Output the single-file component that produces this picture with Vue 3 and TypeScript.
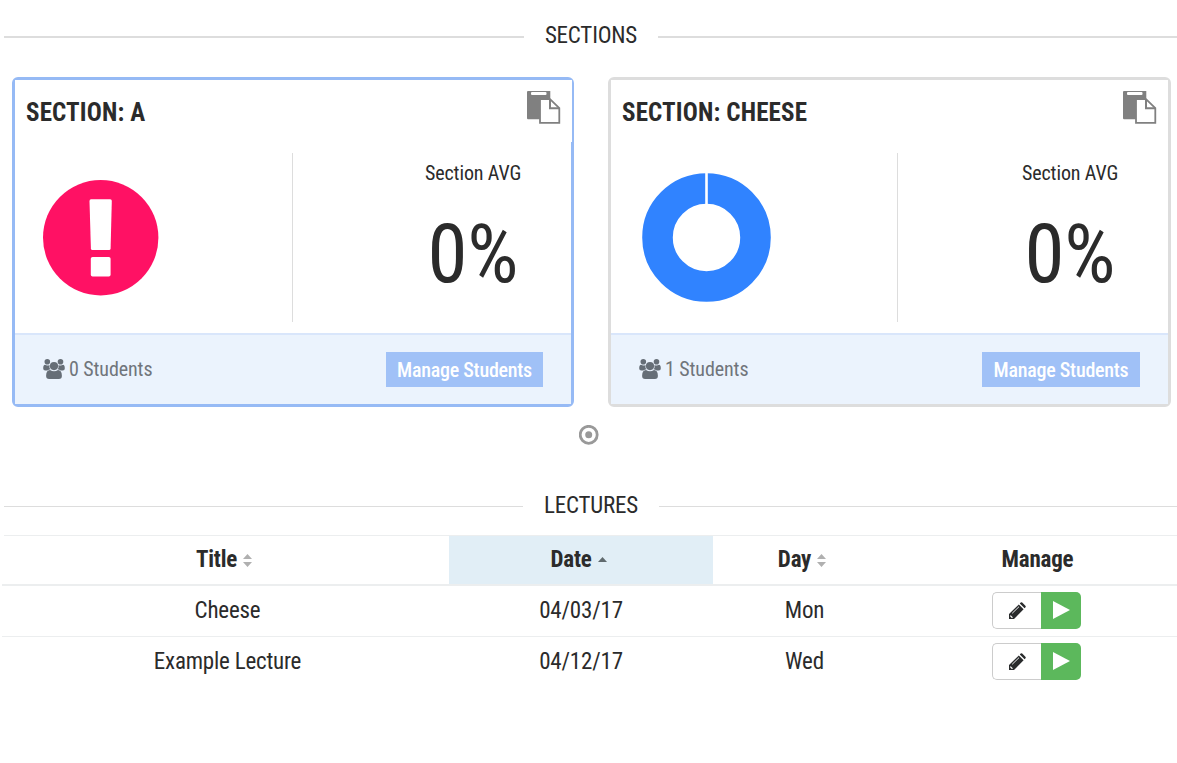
<script setup lang="ts">
interface Section {
  name: string
  students: number
  average: number
  active: boolean
}
interface Lecture {
  title: string
  date: string
  day: string
}

const sections: Section[] = [
  { name: 'A', students: 0, average: 0, active: true },
  { name: 'CHEESE', students: 1, average: 0, active: false },
]
const lectures: Lecture[] = [
  { title: 'Cheese', date: '04/03/17', day: 'Mon' },
  { title: 'Example Lecture', date: '04/12/17', day: 'Wed' },
]
</script>

<template>
  <main class="page">
    <h2 class="rule rule-thick"><span>SECTIONS</span></h2>

    <div class="cards">
      <section v-for="s in sections" :key="s.name" class="card" :class="{ active: s.active }">
        <header class="card-head">
          <h3>SECTION: {{ s.name }}</h3>
          <svg class="paste" viewBox="0 0 34 34" width="34" height="34">
            <path fill="#808080" d="M0 1Q0 0 1 0H23.3V8H13V28.2H1Q0 28.2 0 27Z" />
            <rect x="4" y="1" width="15.5" height="3" rx="1" fill="#fff" />
            <path d="M13 8.2H23L32.3 17.2V31.8H13Z" fill="#fff" stroke="#808080" stroke-width="1.8" />
            <path d="M23 8.2V17.2H32.3" fill="none" stroke="#808080" stroke-width="2" />
          </svg>
        </header>
        <div class="card-body">
          <div class="chart">
            <svg v-if="s.students === 0" class="alert" viewBox="0 0 116 116" width="116" height="116">
              <circle cx="57.7" cy="57.7" r="57.7" fill="#ff1164" />
              <path fill="#fff" d="M48 19.3H67.2Q68.8 19.3 68.8 21L67.6 68.5Q67.5 70 66 70H49.4Q48 70 47.9 68.5L46.5 21Q46.5 19.3 48 19.3Z" />
              <rect x="47.8" y="77" width="19.8" height="19.5" rx="1.8" fill="#fff" />
            </svg>
            <svg v-else class="donut" viewBox="0 0 130 130" width="130" height="130">
              <circle cx="64.5" cy="64.5" r="49" fill="none" stroke="#3083ff" stroke-width="30.6" />
              <path d="M64.5 0V34" stroke="#fff" stroke-width="2.6" />
            </svg>
          </div>
          <div class="average">
            <span class="avg-label">Section AVG</span>
            <span class="avg-value">{{ s.average }}%</span>
          </div>
        </div>
        <footer class="card-foot">
          <span class="students">
            <svg viewBox="0 0 22 20" width="22" height="20" fill="#666e77">
              <circle cx="4.3" cy="2.8" r="2.8" />
              <circle cx="17.5" cy="2.8" r="2.8" />
              <path d="M2 5.8Q4.3 7.2 6.5 6Q6 9 7.5 10.2Q5.5 10.4 4.4 11.4H2.2Q.2 11.4.2 9.4Q.2 6 2 5.8Z" />
              <path d="M20 5.8Q17.7 7.2 15.5 6Q16 9 14.5 10.2Q16.5 10.4 17.6 11.4H19.8Q21.8 11.4 21.8 9.4Q21.8 6 20 5.8Z" />
              <circle cx="11" cy="7.1" r="4.1" />
              <path d="M7 11Q11 13.4 15 11Q18.8 11.2 18.9 16.8Q18.9 20 15.9 20H6.1Q3.1 20 3.1 16.8Q3.2 11.2 7 11Z" />
            </svg>
            <span>{{ s.students }} Students</span>
          </span>
          <button class="manage">Manage Students</button>
        </footer>
      </section>
    </div>

    <div class="pager">
      <svg viewBox="0 0 20 20" width="20" height="20">
        <circle cx="9.7" cy="9.8" r="8.5" fill="none" stroke="#999" stroke-width="2.8" />
        <circle cx="9.7" cy="9.8" r="3.5" fill="#999" />
      </svg>
    </div>

    <h2 class="rule rule-thin"><span>LECTURES</span></h2>

    <table>
      <colgroup><col class="c1" /><col class="c2" /><col class="c3" /><col /></colgroup>
      <thead>
        <tr>
          <th>Title<svg class="sort" viewBox="0 0 9 13" width="9" height="13"><path fill="#b0b0b0" d="M4.5 0L9 5H0ZM0 8H9L4.5 13Z" /></svg></th>
          <th class="sorted">Date<svg class="sort" viewBox="0 0 9 13" width="9" height="13"><path fill="#606a6e" d="M4.5 3L9 8H0Z" /></svg></th>
          <th>Day<svg class="sort" viewBox="0 0 9 13" width="9" height="13"><path fill="#b0b0b0" d="M4.5 0L9 5H0ZM0 8H9L4.5 13Z" /></svg></th>
          <th>Manage</th>
        </tr>
      </thead>
      <tbody>
        <tr v-for="l in lectures" :key="l.date">
          <td>{{ l.title }}</td>
          <td>{{ l.date }}</td>
          <td>{{ l.day }}</td>
          <td>
            <div class="actions">
              <button class="edit" aria-label="Edit">
                <svg viewBox="0 0 17 17" width="17" height="17">
                  <path fill="#292b2c" d="M0 17V12L9.8 2.4L14.6 7.2L5 17ZM10.8 1.4L11.7.5Q12.4-.1 13.2.5L16.4 3.8Q17.1 4.6 16.5 5.3L15.6 6.2Z" />
                  <path d="M3.2 11.3L10 4.7" stroke="#fff" stroke-width=".9" />
                  <path fill="#fff" d="M1.5 13L4 15.5L2.8 16L1.2 14.4Z" />
                </svg>
              </button>
              <button class="play" aria-label="Start">
                <svg viewBox="0 0 17 18" width="17" height="18"><path fill="#fff" d="M0 0L17 9L0 18Z" /></svg>
              </button>
            </div>
          </td>
        </tr>
      </tbody>
    </table>
  </main>
</template>

<style>
body {
  background: #fff;
}
</style>

<style scoped>
.page {
  box-sizing: border-box;
  height: 763px;
  overflow: hidden;
  color: #2b2b2b;
  font-family: "Roboto Condensed", Roboto, "Liberation Sans Narrow", sans-serif;
  font-stretch: 75%;
  font-size: 23px;
  letter-spacing: -0.2px;
}
.page * {
  box-sizing: border-box;
}
h2, h3 {
  margin: 0;
}
button {
  padding: 0;
  font: inherit;
  letter-spacing: inherit;
  cursor: pointer;
}
svg {
  display: block;
  flex: none;
}
.rule {
  display: flex;
  align-items: center;
  height: 30px;
  padding-left: 4px;
  font-size: 23px;
  font-weight: 400;
  line-height: 30px;
}
.rule::before, .rule::after {
  content: "";
  flex: 0 0 519px;
  height: 1px;
  margin-top: 3px;
  background: #ddd;
}
.rule::before {
  flex-basis: 520px;
}
.rule span {
  flex: 1;
  padding-top: 2px;
  line-height: 30px;
  text-align: center;
}
.rule-thick {
  margin-top: 20px;
}
.rule-thick::before, .rule-thick::after {
  height: 2px;
  margin-top: 4px;
}
.rule-thin {
  margin-top: 45px;
}
.rule-thin::before {
  flex-basis: 519px;
}
.rule-thin::after {
  flex-basis: 518px;
}
.cards {
  display: grid;
  grid-template-columns: 562px 563px;
  gap: 34px;
  margin: 27px 0 0 12px;
}
.card {
  display: flex;
  flex-direction: column;
  height: 330px;
  border: 3px solid #ddd;
  border-radius: 6px;
}
.card.active {
  border-color: #96baf5;
}
.card-head {
  display: flex;
  justify-content: space-between;
  height: 62px;
  padding: 11px 11px 0 11px;
  background: #fff;
}
.active .card-head {
  margin-right: -1px;
}
.card-head h3 {
  font-size: 25px;
  font-weight: 700;
  letter-spacing: 0.15px;
  line-height: 43px;
}
.card-body {
  display: flex;
  height: 169px;
  margin-top: 11px;
}
.chart {
  display: flex;
  align-items: center;
  width: 287px;
  border-right: 1px solid #ddd;
}
.active .chart {
  width: 278px;
}
.alert {
  margin-left: 28px;
}
.donut {
  margin-left: 31px;
}
.average {
  display: flex;
  flex: 1;
  flex-direction: column;
  align-items: flex-end;
}
.avg-label {
  width: 96px;
  margin: 8px 50px 0 0;
  font-size: 20px;
  letter-spacing: -0.12px;
  line-height: 24px;
  text-align: center;
  white-space: nowrap;
}
.avg-value {
  width: 96px;
  margin: 20px 50px 0 0;
  font-size: 81px;
  letter-spacing: 0;
  line-height: 99px;
  text-align: center;
}
.card-foot {
  display: flex;
  flex: 1;
  align-items: center;
  justify-content: space-between;
  margin-top: 11px;
  padding: 0 28px;
  border-top: 2px solid #d9e6fb;
  background: #ebf3fd;
  font-size: 20px;
}
.students {
  display: flex;
  gap: 4px;
  margin-bottom: 2px;
  color: #70757b;
  letter-spacing: -0.1px;
}
.students span {
  line-height: 20px;
}
.manage {
  width: 157px;
  height: 35px;
  border: 0;
  background: #a0c1f7;
  color: #fff;
  font-weight: 500;
  letter-spacing: -0.25px;
}
.card:not(.active) .manage {
  width: 158px;
}
.pager {
  display: flex;
  justify-content: center;
  height: 20px;
  margin-top: 18px;
}
table {
  width: 1175px;
  margin: 15px 0 0 2px;
  border-spacing: 0;
  table-layout: fixed;
  text-align: center;
}
.c1 {
  width: 447px;
}
.c2 {
  width: 264px;
}
.c3 {
  width: 183px;
}
th, td {
  padding: 0;
}
th {
  height: 51px;
  border-top: 1px solid #eceeef;
  border-bottom: 2px solid #eceeef;
  font-weight: 700;
  line-height: 48px;
}
th:first-child {
  border-top: 0;
  padding: 1px 0 0 2px;
  background: linear-gradient(#eceeef, #eceeef) 2px 0 / 100% 1px no-repeat;
}
th:last-child {
  padding-left: 2px;
}
.sorted {
  background: #e1eef6;
}
.sort {
  display: inline-block;
  margin: 0 5px 0 6px;
  vertical-align: 0;
}
td {
  height: 50px;
  line-height: 48px;
}
tr + tr td {
  height: 51px;
  border-top: 1px solid #eceeef;
}
td:first-child {
  padding-left: 4px;
}
.actions {
  display: flex;
  justify-content: center;
  margin-bottom: 2px;
}
.edit, .play {
  display: flex;
  align-items: center;
  justify-content: center;
  height: 37px;
}
.edit {
  width: 49px;
  border: 1px solid #ccc;
  border-right: 0;
  border-radius: 5px 0 0 5px;
  background: #fff;
}
.play {
  width: 40px;
  border: 0;
  border-radius: 0 5px 5px 0;
  background: #5cb85c;
}
</style>
